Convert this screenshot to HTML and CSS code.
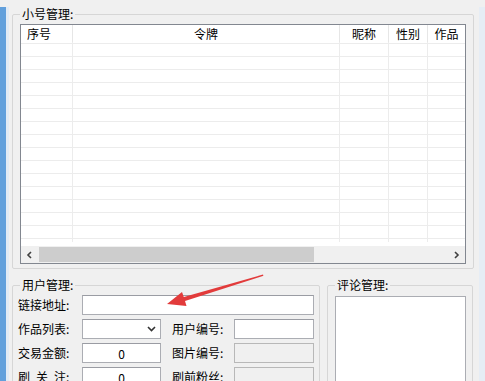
FILE: index.html
```html
<!DOCTYPE html>
<html lang="zh-CN">
  <head>
    <meta charset="UTF-8">
    <title>小号管理</title>
    <link rel="stylesheet" href="styles.css">
  </head>
  <body>
    <div class="window">
      <fieldset class="group group-accounts">
        <legend>小号管理:</legend>
        <div class="listview">
          <div class="lv-head">
            <div class="col c-no left">序号</div>
            <div class="col c-token">令牌</div>
            <div class="col c-nick">昵称</div>
            <div class="col c-sex">性别</div>
            <div class="col c-works">作品</div>
          </div>
          <div class="lv-body">
            <div class="col c-no"></div>
            <div class="col c-token"></div>
            <div class="col c-nick"></div>
            <div class="col c-sex"></div>
            <div class="col c-works"></div>
          </div>
          <div class="hscroll">
            <span class="sb-btn">
              <svg width="7" height="8" viewBox="0 0 7 8"><polyline points="5,1 2,4 5,7" fill="none" stroke="#404040" stroke-width="1.6"/></svg>
            </span>
            <span class="sb-thumb"></span>
            <span class="sb-track"></span>
            <span class="sb-btn">
              <svg width="7" height="8" viewBox="0 0 7 8"><polyline points="2,1 5,4 2,7" fill="none" stroke="#404040" stroke-width="1.6"/></svg>
            </span>
          </div>
        </div>
      </fieldset>

      <div class="bottom">
        <fieldset class="group group-user">
          <legend>用户管理:</legend>
          <div class="form-grid">
            <label>链接地址:</label>
            <input class="field span3" type="text">

            <label>作品列表:</label>
            <div class="field combo">
              <svg width="9" height="6" viewBox="0 0 9 6"><polyline points="1,1 4.5,4.5 8,1" fill="none" stroke="#333" stroke-width="1.6"/></svg>
            </div>
            <label class="second">用户编号:</label>
            <input class="field" type="text">

            <label>交易金额:</label>
            <input class="field num" type="text" value="0">
            <label class="second">图片编号:</label>
            <input class="field off" type="text" disabled>

            <label>刷&ensp;关&ensp;注:</label>
            <input class="field num" type="text" value="0">
            <label class="second">刷前粉丝:</label>
            <input class="field off" type="text" disabled>
          </div>
        </fieldset>

        <fieldset class="group group-comment">
          <legend>评论管理:</legend>
          <textarea class="comments"></textarea>
        </fieldset>
      </div>

      <!-- annotation arrow drawn over the form -->
      <svg class="annot" width="485" height="381" viewBox="0 0 485 381">
        <polygon points="167,297 182,285 183.8,290 263,267.6 263.4,268.8 185,294 186.5,299" fill="#e23b3b"/>
      </svg>
    </div>
  </body>
</html>
```

FILE: styles.css
```css
html, body {
  margin: 0;
  padding: 0;
  height: 381px;
  overflow: hidden;
}
body {
  background: #f0f0f0;
  font: 12px "Noto Sans CJK SC", "Liberation Sans", sans-serif;
  color: #000;
}
.window {
  position: relative;
  box-sizing: border-box;
  width: 485px;
  height: 381px;
  border-left: 6px solid #62a0dc;
  border-right: 6px solid #e6edf5;
  padding: 0 5px 0 6px;
  background: linear-gradient(to right, #e2ebf5 0 3px, #f0f0f0 3px);
}

/* group boxes */
.group {
  margin: 0;
  border: 1px solid #d6d6d6;
  border-radius: 2px;
  min-width: 0;
  box-sizing: border-box;
}
.group legend {
  padding: 0 2px;
  line-height: 14px;
}
.group-accounts {
  margin-top: 7px;
  padding: 3px 7px 4px 7px;
}

/* list view */
.listview {
  border: 1px solid #828790;
  height: 240px;
  box-sizing: border-box;
  background: #fff;
  display: flex;
  flex-direction: column;
}
.lv-head, .lv-body {
  display: flex;
}
.lv-head {
  height: 17px;
  line-height: 17px;
}
.lv-head .col {
  text-align: center;
  border-right: 1px solid #e6e6e6;
  box-sizing: border-box;
}
.lv-head .col.left {
  text-align: left;
  padding-left: 6px;
}
.lv-body {
  height: 204px;
  background: repeating-linear-gradient(to bottom, #fff 0 1px, #ececec 1px 2px, #fff 2px 13px);
}
.lv-body .col {
  border-right: 1px solid #ececec;
  box-sizing: border-box;
  height: 200px;
}
.c-no { width: 52px; }
.c-token { width: 267px; }
.c-nick { width: 49px; }
.c-sex { width: 39px; }
.c-works { width: 37px; }
.lv-head .c-works, .lv-body .c-works { border-right: none; }

.hscroll {
  height: 17px;
  display: flex;
  background: #f0f0f0;
}
.sb-btn {
  width: 17px;
  display: flex;
  align-items: center;
  justify-content: center;
}
.sb-thumb {
  width: 275px;
  margin: 1px 0 1px 1px;
  background: #cdcdcd;
}
.sb-track {
  flex: 1;
}

/* bottom area */
.bottom {
  display: flex;
  gap: 7px;
  margin-top: 9px;
}
.group-user {
  width: 308px;
  padding: 3px 5px 10px 5px;
}
.group-user legend {
  margin-left: 2px;
}
.group-comment {
  flex: 1;
  margin-right: 1px;
  padding: 4px 6px 0 7px;
}
.group-comment legend {
  margin-left: 0;
}

.form-grid {
  display: grid;
  grid-template-columns: 64px 79px 73px 80px;
  grid-auto-rows: 20px;
  row-gap: 4px;
}
.form-grid label {
  line-height: 20px;
  white-space: nowrap;
}
.form-grid label.second {
  padding-left: 11px;
}
.field {
  box-sizing: border-box;
  height: 20px;
  width: 100%;
  margin: 0;
  border: 1px solid #abadb3;
  border-top-color: #9a9ca3;
  background: #fff;
  font: inherit;
  padding: 0 3px;
}
.field.span3 {
  grid-column: 2 / 5;
}
.field.num {
  text-align: center;
}
.field.off {
  background: #f0f0f0;
  border-color: #b8b8b8;
}
.combo {
  display: flex;
  align-items: center;
  justify-content: flex-end;
  padding-right: 4px;
}

.comments {
  display: block;
  box-sizing: border-box;
  width: 100%;
  height: 110px;
  margin: 0;
  border: 1px solid #abadb3;
  background: #fff;
  resize: none;
}

.annot {
  position: absolute;
  left: -6px;
  top: 0;
  pointer-events: none;
}
```
